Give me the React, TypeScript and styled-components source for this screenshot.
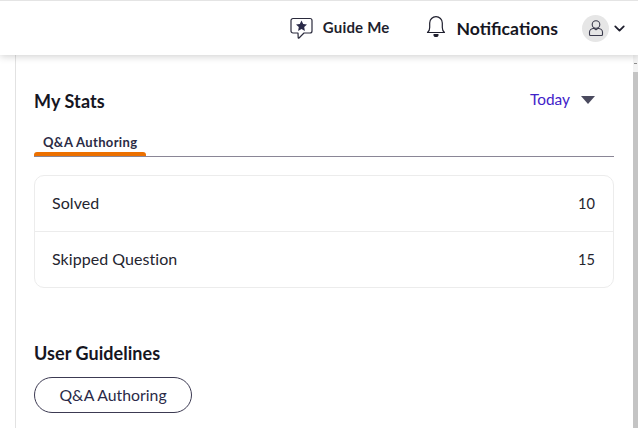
import React from "react";
import styled, { createGlobalStyle } from "styled-components";
import { ChevronDown } from "lucide-react";

const Global = createGlobalStyle`
  html, body { margin: 0; padding: 0; background: #fff; overflow: hidden; }
  body { font-family: "Lato", "Noto Sans", sans-serif; color: #1e1e2c; }
  #root { width: 638px; height: 428px; overflow: hidden; }
`;

const Page = styled.div`
  width: 638px;
  height: 428px;
  display: flex;
  flex-direction: column;
  overflow: hidden;
`;

const TopBar = styled.header`
  height: 54px;
  flex: none;
  border-top: 1px solid #e4e4e4;
  display: flex;
  align-items: center;
  justify-content: flex-end;
  padding-right: 10px;
  background: #fff;
  box-shadow: 0 1px 8px rgba(0, 0, 0, 0.2);
  position: relative;
  z-index: 2;
`;

const GuideMe = styled.div`
  display: flex;
  align-items: center;
  gap: 10px;
  font: 700 15px "Lato", sans-serif;
  letter-spacing: 0.2px;
  color: #1f1f2e;
  margin-right: 36px;
  margin-top: -2px;
`;

const Notifications = styled.div`
  display: flex;
  align-items: center;
  gap: 11px;
  font: 700 17.6px "Lato", sans-serif;
  color: #16161f;
  margin-right: 24px;
`;

const Avatar = styled.div`
  width: 27px;
  height: 27px;
  border-radius: 50%;
  background: #e6e6e6;
  display: flex;
  align-items: center;
  justify-content: center;
  margin-right: 2px;
`;

const Body = styled.div`
  flex: 1;
  display: flex;
  min-height: 0;
`;

const Content = styled.main`
  flex: 1;
  margin-left: 15px;
  border-left: 1px solid #e2e2e2;
  padding: 0 19px 0 18px;
  min-width: 0;
`;

const ScrollTrack = styled.div`
  width: 5px;
  flex: none;
  background: #f3f3f3;
  display: flex;
  flex-direction: column;
  padding-top: 17px;
  position: relative;
  &::before {
    content: "";
    position: absolute;
    top: 8px;
    left: 1px;
    width: 3px;
    height: 1px;
    background: #8c8c8c;
  }
`;

const ScrollThumb = styled.div`
  flex: 1;
  background: #c4c4c4;
`;

const StatsHead = styled.div`
  display: flex;
  justify-content: space-between;
  align-items: center;
  margin-top: 33px;
  height: 26px;
`;

const Title = styled.h2`
  margin: 0;
  font: 700 18px/24px "Lato", sans-serif;
  letter-spacing: 0.1px;
  color: #16161f;
`;

const Range = styled.div`
  display: flex;
  align-items: center;
  gap: 11px;
  font: 400 15.4px "Lato", sans-serif;
  color: #3f22c9;
  padding-right: 19px;
  margin-top: -4px;
`;

const Caret = styled.span`
  width: 0;
  height: 0;
  margin-top: 1px;
  border-left: 7px solid transparent;
  border-right: 7px solid transparent;
  border-top: 8px solid #4a4a5e;
`;

const Tabs = styled.div`
  margin-top: 17px;
  border-bottom: 1px solid #8a8696;
  height: 25px;
  display: flex;
`;

const Tab = styled.div`
  width: 112px;
  height: 25px;
  box-sizing: border-box;
  padding: 3px 0 0 9px;
  font: 700 13px/16px "Lato", sans-serif;
  letter-spacing: 0.35px;
  color: #2b2b45;
  position: relative;
  &::after {
    content: "";
    position: absolute;
    left: 0;
    right: 0;
    bottom: 0;
    height: 4px;
    background: #ec7000;
    border-radius: 3px 3px 0 0;
  }
`;

const StatsCard = styled.section`
  margin-top: 18px;
  border: 1px solid #ececec;
  border-radius: 10px;
`;

const StatRow = styled.div`
  height: 55px;
  box-sizing: border-box;
  display: flex;
  align-items: center;
  justify-content: space-between;
  padding: 0 18px 2px 17px;
  font: 400 16px "Lato", sans-serif;
  letter-spacing: 0.05px;
  color: #25252f;
  & + & {
    height: 56px;
    border-top: 1px solid #ececec;
  }
`;

const StatValue = styled.span`
  font-size: 14.6px;
  letter-spacing: 0;
  margin-top: 2px;
`;

const Guidelines = styled.h2`
  margin: 53px 0 0;
  font: 700 18px/24px "Lato", sans-serif;
  letter-spacing: 0.05px;
  color: #16161f;
`;

const Pill = styled.button`
  margin-top: 12px;
  width: 158px;
  height: 36px;
  border-radius: 18px;
  border: 1px solid #3c3a52;
  background: #fff;
  font: 400 15.8px "Lato", sans-serif;
  color: #2a2a48;
  padding: 0 0 1px;
`;

export default function App() {
  return (
    <Page>
      <Global />
      <TopBar>
        <GuideMe>
          <svg width="24" height="26" viewBox="0 0 24 26" fill="none">
            <path d="M4 4.500h17a2 2 0 0 1 2 2v10.500a2 2 0 0 1-2 2h-6l-5 5q-.6.500-.8-.2l-.2-4.800H4a2 2 0 0 1-2-2V6.500a2 2 0 0 1 2-2z" stroke="#2a2a3c" strokeWidth="1.200" strokeLinejoin="round" />
            <path d="M12.500 6.500l1.700 3.500 3.800.5-2.800 2.600.7 3.800-3.400-1.800-3.400 1.800.7-3.800-2.800-2.600 3.800-.5z" fill="#2a2a48" />
          </svg>
          Guide Me
        </GuideMe>
        <Notifications>
          <svg width="20" height="24" viewBox="0 2 20 24" fill="none" stroke="#1f1f2e" strokeWidth="1.200" strokeLinejoin="round">
            <path d="M1.500 18.500c1.500-1.200 2.200-3 2.200-5V9a6.300 6.300 0 0 1 12.600 0v4.500c0 2 .7 3.800 2.200 5z" />
            <path d="M8 20.500a2 2 0 0 0 4 0z" fill="#1f1f2e" />
          </svg>
          Notifications
        </Notifications>
        <Avatar>
          <svg width="18" height="18" viewBox="0 0 18 18" fill="none" stroke="#3a3a4c" strokeWidth="1.100">
            <circle cx="9" cy="5.500" r="3.800" />
            <path d="M2.500 15.500v-2.500c0-1.800 2.200-3.500 4.500-3.800l2 1.600 2-1.600c2.300.3 4.500 2 4.500 3.800v2.500a1 1 0 0 1-1 1h-11a1 1 0 0 1-1-1z" strokeLinejoin="round" />
          </svg>
        </Avatar>
        <ChevronDown size={17} color="#1f1f2e" strokeWidth={2.500} />
      </TopBar>
      <Body>
        <Content>
          <StatsHead>
            <Title>My Stats</Title>
            <Range>
              Today
              <Caret />
            </Range>
          </StatsHead>
          <Tabs>
            <Tab>Q&amp;A Authoring</Tab>
          </Tabs>
          <StatsCard>
            <StatRow>
              <span>Solved</span>
              <StatValue>10</StatValue>
            </StatRow>
            <StatRow>
              <span>Skipped Question</span>
              <StatValue>15</StatValue>
            </StatRow>
          </StatsCard>
          <Guidelines>User Guidelines</Guidelines>
          <Pill>Q&amp;A Authoring</Pill>
        </Content>
        <ScrollTrack>
          <ScrollThumb />
        </ScrollTrack>
      </Body>
    </Page>
  );
}
